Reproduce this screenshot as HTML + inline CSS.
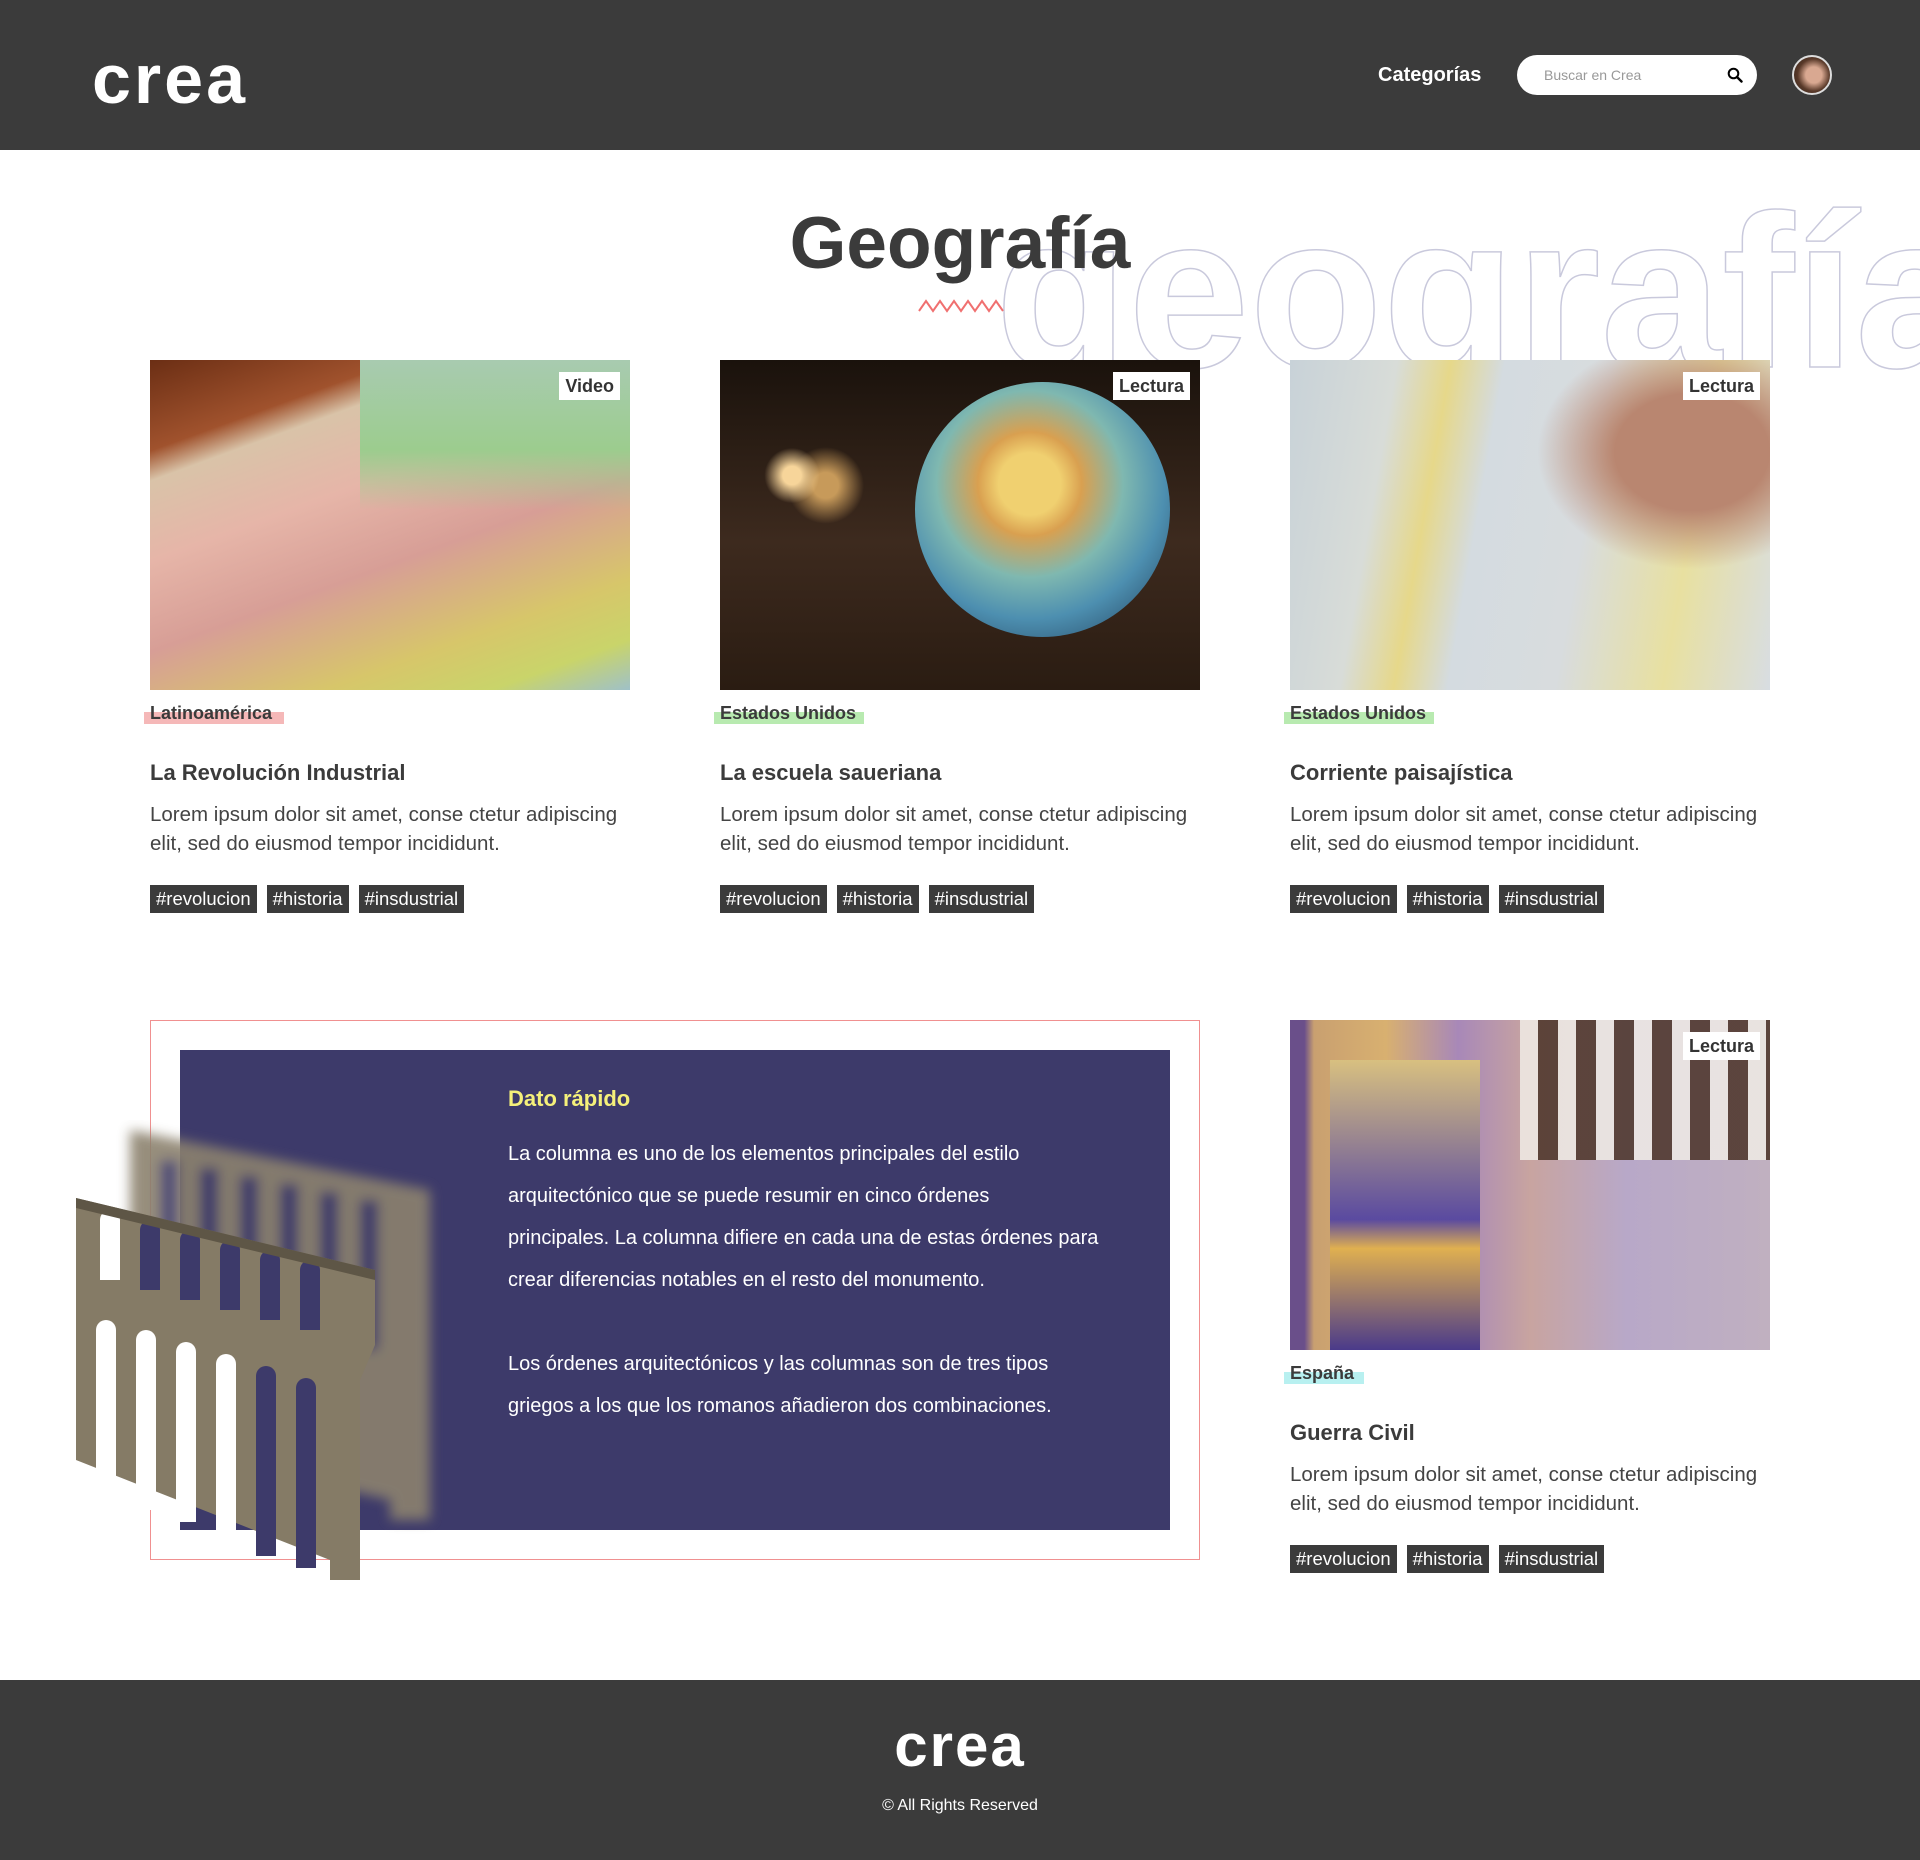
<!DOCTYPE html>
<html><head><meta charset="utf-8">
<style>
*{margin:0;padding:0;box-sizing:border-box}
body{width:1920px;height:1860px;position:relative;background:#fff;font-family:"Liberation Sans",sans-serif;color:#3b3b3b;overflow:hidden}
.abs{position:absolute}
header{position:absolute;left:0;top:0;width:1920px;height:150px;background:#3b3b3b}
.logo{position:absolute;color:#fff;font-weight:bold;letter-spacing:1px;line-height:1}
.card{position:absolute;width:480px}
.img{position:absolute;left:0;top:0;width:480px;height:330px;overflow:hidden}
.badge{position:absolute;right:10px;top:12px;background:#fff;color:#333;font-weight:bold;font-size:18px;padding:3px 6px;line-height:22px}
.cat{position:absolute;left:0;font-weight:bold;font-size:18px;line-height:20px;z-index:1}
.hl{position:absolute;left:-6px;height:12px}
.ttl{position:absolute;left:0;font-weight:bold;font-size:22px;white-space:nowrap}
.desc{position:absolute;left:0;font-size:20.5px;line-height:29px;width:500px;color:#444;white-space:nowrap}
.tags{position:absolute;left:0;display:flex;gap:10px}
.tags span{background:#3b3b3b;color:#fff;font-size:18.5px;padding:0 6px;height:28px;line-height:28px}
</style></head><body>
<header>
<div class="logo" style="left:92px;top:44px;font-size:70px;letter-spacing:3px">crea</div>
<div class="abs" style="left:1378px;top:64px;color:#fff;font-weight:bold;font-size:20px">Categorías</div>
<div class="abs" style="left:1517px;top:55px;width:240px;height:40px;border-radius:20px;background:#fff">
<span class="abs" style="left:27px;top:12px;font-size:14px;color:#999">Buscar en Crea</span>
<svg class="abs" style="left:210px;top:12px" width="16" height="16" viewBox="0 0 16 16"><circle cx="6.5" cy="6.5" r="4.8" fill="none" stroke="#000" stroke-width="2"/><path d="M10 10l4.5 4.5" stroke="#000" stroke-width="2.4" stroke-linecap="round"/></svg>
</div>
<div class="abs" style="left:1792px;top:55px;width:40px;height:40px;border-radius:50%;border:2px solid #ddd;background:radial-gradient(circle at 55% 50%,#d9a891 0 30%,#5a3a2a 60%,#2a1c14)"></div>
</header>

<svg class="abs" style="left:990px;top:170px" width="930" height="240"><text x="5" y="197" font-family="Liberation Sans,sans-serif" font-weight="bold" font-size="218" fill="none" stroke="#c9c9dc" stroke-width="1.5">geografía</text></svg>
<div class="abs" style="left:0;width:1920px;top:207px;text-align:center;font-weight:bold;font-size:73px;color:#3b3b3b;line-height:1">Geografía</div>
<svg class="abs" style="left:918px;top:298px" width="86" height="16"><path d="M1 13 L8 3 L15 13 L22 3 L29 13 L36 3 L43 13 L50 3 L57 13 L64 3 L71 13 L78 3 L85 13" fill="none" stroke="#f07070" stroke-width="2"/></svg>

<!-- card 1 -->
<div class="card" style="left:150px;top:360px">
<div class="img" style="background:linear-gradient(160deg,#6b2e14 0%,#a0522d 18%,#d9c3a8 24%,#e6b5a8 40%,#d79e96 58%,#d7c66a 78%,#c9d46a 90%,#9fc1c8 100%)">
<div class="abs" style="left:210px;top:0;width:270px;height:150px;background:linear-gradient(180deg,#a8cbb0,#9ccc8e 60%,transparent)"></div>
<div class="badge">Video</div></div>
<div class="hl" style="top:352px;width:140px;background:#f5b8b8"></div>
<div class="cat" style="top:343px">Latinoamérica</div>
<div class="ttl" style="top:400px">La Revolución Industrial</div>
<div class="desc" style="top:440px">Lorem ipsum dolor sit amet, conse ctetur adipiscing<br>elit, sed do eiusmod tempor incididunt.</div>
<div class="tags" style="top:525px"><span>#revolucion</span><span>#historia</span><span>#insdustrial</span></div>
</div>

<!-- card 2 -->
<div class="card" style="left:720px;top:360px">
<div class="img" style="background:radial-gradient(circle at 15% 35%,#f7d59a 0 2%,transparent 6%),radial-gradient(circle at 22% 38%,#c79a5a 0 3%,transparent 9%),linear-gradient(180deg,#1a120c,#3d2a1e 55%,#2a1c12)">
<div class="abs" style="left:195px;top:22px;width:255px;height:255px;border-radius:50%;background:radial-gradient(circle at 45% 40%,#f0d070 0 15%,#d9a050 25%,#7fb8b0 45%,#4d8fb0 65%,#1c3550 100%)"></div>
<div class="badge">Lectura</div></div>
<div class="hl" style="top:352px;width:150px;background:#b8eab0"></div>
<div class="cat" style="top:343px">Estados Unidos</div>
<div class="ttl" style="top:400px">La escuela saueriana</div>
<div class="desc" style="top:440px">Lorem ipsum dolor sit amet, conse ctetur adipiscing<br>elit, sed do eiusmod tempor incididunt.</div>
<div class="tags" style="top:525px"><span>#revolucion</span><span>#historia</span><span>#insdustrial</span></div>
</div>

<!-- card 3 -->
<div class="card" style="left:1290px;top:360px">
<div class="img" style="background:linear-gradient(100deg,#c8d2d8 0%,#d8dcd8 20%,#e6d88a 30%,#d4dbe0 40%,#d8dcde 60%,#e8e0a0 80%,#d8dde2 100%)">
<div class="abs" style="left:220px;top:0;width:260px;height:230px;background:radial-gradient(ellipse at 70% 40%,#b98670 0 30%,transparent 60%)"></div>
<div class="badge">Lectura</div></div>
<div class="hl" style="top:352px;width:150px;background:#b8eab0"></div>
<div class="cat" style="top:343px">Estados Unidos</div>
<div class="ttl" style="top:400px">Corriente paisajística</div>
<div class="desc" style="top:440px">Lorem ipsum dolor sit amet, conse ctetur adipiscing<br>elit, sed do eiusmod tempor incididunt.</div>
<div class="tags" style="top:525px"><span>#revolucion</span><span>#historia</span><span>#insdustrial</span></div>
</div>

<!-- dato rapido -->
<div class="abs" style="left:150px;top:1020px;width:1050px;height:540px;border:1px solid #f09090"></div>
<div class="abs" style="left:180px;top:1050px;width:990px;height:480px;background:#3d3a6a"></div>
<div class="abs" style="left:508px;top:1086px;color:#f5f07a;font-weight:bold;font-size:22px">Dato rápido</div>
<div class="abs" style="left:508px;top:1133px;color:#fff;font-size:20px;line-height:42px;white-space:nowrap">La columna es uno de los elementos principales del estilo<br>arquitectónico que se puede resumir en cinco órdenes<br>principales. La columna difiere en cada una de estas órdenes para<br>crear diferencias notables en el resto del monumento.<br><br>Los órdenes arquitectónicos y las columnas son de tres tipos<br>griegos a los que los romanos añadieron dos combinaciones.</div>
<svg class="abs" style="left:60px;top:1120px" width="420" height="470" viewBox="0 0 420 470">
<defs><filter id="b"><feGaussianBlur stdDeviation="6"/></filter></defs>
<g filter="url(#b)" opacity="0.9"><polygon points="70,10 370,70 370,400 330,400 330,380 70,320" fill="#8c826e"/><g fill="#3d3a6a"><rect x="100" y="40" width="18" height="150"/><rect x="140" y="48" width="18" height="150"/><rect x="180" y="56" width="18" height="150"/><rect x="220" y="64" width="18" height="150"/><rect x="260" y="72" width="18" height="150"/><rect x="300" y="80" width="18" height="150"/></g></g>
<polygon points="16,78 315,150 315,225 300,260 300,460 270,460 270,440 16,340" fill="#857b66"/>
<g fill="#3d3a6a">
<path d="M40 100 a10 10 0 0 1 20 0 v60 h-20z" fill="#fff"/>
<path d="M80 110 a10 10 0 0 1 20 0 v60 h-20z"/><path d="M120 120 a10 10 0 0 1 20 0 v60 h-20z"/><path d="M160 130 a10 10 0 0 1 20 0 v60 h-20z"/><path d="M200 140 a10 10 0 0 1 20 0 v60 h-20z"/><path d="M240 150 a10 10 0 0 1 20 0 v60 h-20z"/>
<path d="M36 210 a10 10 0 0 1 20 0 v160 h-20z" fill="#fff"/>
<path d="M76 220 a10 10 0 0 1 20 0 v170 h-20z" fill="#fff"/><path d="M116 232 a10 10 0 0 1 20 0 v170 h-20z" fill="#fff"/><path d="M156 244 a10 10 0 0 1 20 0 v180 h-20z" fill="#fff"/><path d="M196 256 a10 10 0 0 1 20 0 v180 h-20z"/><path d="M236 268 a10 10 0 0 1 20 0 v180 h-20z"/>
</g>
<polygon points="16,78 315,150 315,160 16,88" fill="#5e5646"/>
</svg>

<!-- card 4 -->
<div class="card" style="left:1290px;top:1020px">
<div class="img" style="background:linear-gradient(90deg,#6a4f8a 0 3%,#c9a070 5%,#d8b070 20%,#a888b8 35%,#c8a4a0 50%,#b8a8c8 70%,#c0b0c0 100%)">
<div class="abs" style="left:230px;top:0;width:250px;height:140px;background:repeating-linear-gradient(90deg,#f0ece6 0 18px,#4a3226 18px 38px);opacity:.85"></div>
<div class="abs" style="left:40px;top:40px;width:150px;height:290px;background:linear-gradient(180deg,#d8c080,#5a4aa0 55%,#e0b050 65%,#4a3a8a)"></div>
<div class="badge">Lectura</div></div>
<div class="hl" style="top:352px;width:80px;background:#b8f0f0"></div>
<div class="cat" style="top:343px">España</div>
<div class="ttl" style="top:400px">Guerra Civil</div>
<div class="desc" style="top:440px">Lorem ipsum dolor sit amet, conse ctetur adipiscing<br>elit, sed do eiusmod tempor incididunt.</div>
<div class="tags" style="top:525px"><span>#revolucion</span><span>#historia</span><span>#insdustrial</span></div>
</div>

<footer class="abs" style="left:0;top:1680px;width:1920px;height:180px;background:#3b3b3b">
<div class="logo" style="left:0;width:1920px;text-align:center;top:36px;font-size:60px;letter-spacing:2px">crea</div>
<div class="abs" style="left:0;width:1920px;text-align:center;top:117px;color:#fff;font-size:16px">© All Rights Reserved</div>
</footer>
</body></html>
